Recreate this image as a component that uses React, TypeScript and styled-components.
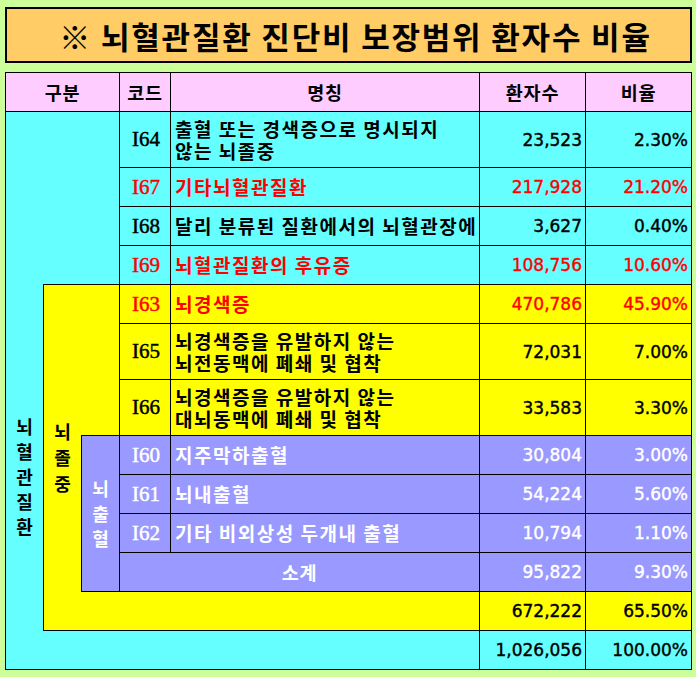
import React from "react";
import styled, { createGlobalStyle, css } from "styled-components";

const GlobalStyle = createGlobalStyle`
  html, body {
    margin: 0;
    padding: 0;
    background: #ccff99;
  }
  * { box-sizing: border-box; }
`;

type Tone = "pink" | "cyan" | "yellow" | "purple";
type Ink = "black" | "red" | "white";

const toneBg: Record<Tone, string> = {
  pink: "#ffccff",
  cyan: "#66ffff",
  yellow: "#ffff00",
  purple: "#9999ff",
};
const inkColor: Record<Ink, string> = {
  black: "#000000",
  red: "#ff0000",
  white: "#ffffff",
};

const KR = `"Noto Sans CJK KR", "Noto Sans", sans-serif`;

const Page = styled.div`
  padding: 7px 4px 0 5px;
  width: 696px;
`;

const TitleBox = styled.div`
  width: 687px;
  height: 56px;
  border: 2px solid #000;
  background: #ffcc66;
  display: flex;
  align-items: center;
  justify-content: center;
  padding-left: 14px;
  margin-bottom: 9px;
`;

const TitleText = styled.h1`
  margin: 0;
  font-family: ${KR};
  font-weight: 700;
  font-size: 31px;
  letter-spacing: 1.8px;
  color: #000;
  line-height: 1;
`;

const Table = styled.div`
  display: grid;
  width: 687px;
  grid-template-columns: 37px 38px 38px 51px 309px 106px 106px;
  grid-template-rows: 38px 56px 39px 39px 39px 39px 56px 56px 39px 39px 39px 39px 39px 39px;
  border: 1px solid #000;
  background: #66ffff;
`;

type CellProps = {
  $col: string;
  $row: string;
  $tone: Tone;
  $ink?: Ink;
  $top?: boolean;
  $left?: boolean;
};

const cellBase = css<CellProps>`
  grid-column: ${(p) => p.$col};
  grid-row: ${(p) => p.$row};
  background: ${(p) => toneBg[p.$tone]};
  color: ${(p) => inkColor[p.$ink ?? "black"]};
  border-top: ${(p) => (p.$top ? "1px solid #000" : "none")};
  border-left: ${(p) => (p.$left ? "1px solid #000" : "none")};
  display: flex;
  align-items: center;
  min-width: 0;
`;

const HeadCell = styled.div<CellProps>`
  ${cellBase};
  justify-content: center;
  font-family: ${KR};
  font-weight: 700;
  font-size: 18.5px;
  letter-spacing: 0.8px;
`;

const GroupCell = styled.div<CellProps>`
  ${cellBase};
  justify-content: center;
`;

const VerticalLabel = styled.span<{ $pitch: number }>`
  writing-mode: vertical-rl;
  text-orientation: upright;
  font-family: ${KR};
  font-weight: 700;
  font-size: 18px;
  line-height: 1;
  letter-spacing: ${(p) => p.$pitch - 18}px;
  margin-bottom: ${(p) => -(p.$pitch - 18)}px;
`;

const CodeCell = styled.div<CellProps>`
  ${cellBase};
  justify-content: center;
  padding-left: 2px;
  font-family: "Liberation Serif", "Times New Roman", serif;
  font-size: 21px;
  -webkit-text-stroke: 0.45px currentColor;
`;

const NameCell = styled.div<CellProps>`
  ${cellBase};
  padding-left: 4px;
  font-family: ${KR};
  font-weight: 700;
  font-size: 19px;
  letter-spacing: 1.5px;
  line-height: 22px;
  white-space: pre-line;
`;

const SubtotalCell = styled.div<CellProps>`
  ${cellBase};
  justify-content: center;
  font-family: ${KR};
  font-weight: 700;
  font-size: 18.5px;
  letter-spacing: 0.8px;
`;

const NumCell = styled.div<CellProps>`
  ${cellBase};
  justify-content: flex-end;
  padding-right: 3px;
  font-family: "DejaVu Sans", Verdana, sans-serif;
  font-size: 17px;
  -webkit-text-stroke: 0.4px currentColor;
`;

const BlankCell = styled.div<CellProps>`
  ${cellBase};
`;

type Row = {
  code: string;
  name: string;
  count: string;
  ratio: string;
  tone: Tone;
  ink: Ink;
};

const rows: Row[] = [
  { code: "I64", name: "출혈 또는 경색증으로 명시되지\n않는 뇌졸중", count: "23,523", ratio: "2.30%", tone: "cyan", ink: "black" },
  { code: "I67", name: "기타뇌혈관질환", count: "217,928", ratio: "21.20%", tone: "cyan", ink: "red" },
  { code: "I68", name: "달리 분류된 질환에서의 뇌혈관장에", count: "3,627", ratio: "0.40%", tone: "cyan", ink: "black" },
  { code: "I69", name: "뇌혈관질환의 후유증", count: "108,756", ratio: "10.60%", tone: "cyan", ink: "red" },
  { code: "I63", name: "뇌경색증", count: "470,786", ratio: "45.90%", tone: "yellow", ink: "red" },
  { code: "I65", name: "뇌경색증을 유발하지 않는\n뇌전동맥에 폐쇄 및 협착", count: "72,031", ratio: "7.00%", tone: "yellow", ink: "black" },
  { code: "I66", name: "뇌경색증을 유발하지 않는\n대뇌동맥에 폐쇄 및 협착", count: "33,583", ratio: "3.30%", tone: "yellow", ink: "black" },
  { code: "I60", name: "지주막하출혈", count: "30,804", ratio: "3.00%", tone: "purple", ink: "white" },
  { code: "I61", name: "뇌내출혈", count: "54,224", ratio: "5.60%", tone: "purple", ink: "white" },
  { code: "I62", name: "기타 비외상성 두개내 출혈", count: "10,794", ratio: "1.10%", tone: "purple", ink: "white" },
];

export default function App() {
  return (
    <Page>
      <GlobalStyle />
      <TitleBox>
        <TitleText>※ 뇌혈관질환 진단비 보장범위 환자수 비율</TitleText>
      </TitleBox>
      <Table>
        <HeadCell $col="1 / 4" $row="1" $tone="pink">구분</HeadCell>
        <HeadCell $col="4" $row="1" $tone="pink" $left>코드</HeadCell>
        <HeadCell $col="5" $row="1" $tone="pink" $left>명칭</HeadCell>
        <HeadCell $col="6" $row="1" $tone="pink" $left>환자수</HeadCell>
        <HeadCell $col="7" $row="1" $tone="pink" $left>비율</HeadCell>

        <BlankCell $col="1 / 4" $row="2 / 6" $tone="cyan" $top />
        <GroupCell $col="1" $row="6 / 15" $tone="cyan">
          <VerticalLabel $pitch={25}>뇌혈관질환</VerticalLabel>
        </GroupCell>
        <GroupCell $col="2" $row="6 / 14" $tone="yellow" $top $left>
          <VerticalLabel $pitch={26}>뇌졸중</VerticalLabel>
        </GroupCell>
        <BlankCell $col="3" $row="6 / 9" $tone="yellow" $top />
        <GroupCell $col="3" $row="9 / 13" $tone="purple" $ink="white" $top $left>
          <VerticalLabel $pitch={25}>뇌출혈</VerticalLabel>
        </GroupCell>

        {rows.map((r, i) => {
          const row = String(i + 2);
          return (
            <React.Fragment key={r.code}>
              <CodeCell $col="4" $row={row} $tone={r.tone} $ink={r.ink} $top $left>{r.code}</CodeCell>
              <NameCell $col="5" $row={row} $tone={r.tone} $ink={r.ink} $top $left>{r.name}</NameCell>
              <NumCell $col="6" $row={row} $tone={r.tone} $ink={r.ink} $top $left>{r.count}</NumCell>
              <NumCell $col="7" $row={row} $tone={r.tone} $ink={r.ink} $top $left>{r.ratio}</NumCell>
            </React.Fragment>
          );
        })}

        <SubtotalCell $col="4 / 6" $row="12" $tone="purple" $ink="white" $top $left>소계</SubtotalCell>
        <NumCell $col="6" $row="12" $tone="purple" $ink="white" $top $left>95,822</NumCell>
        <NumCell $col="7" $row="12" $tone="purple" $ink="white" $top $left>9.30%</NumCell>

        <BlankCell $col="3 / 6" $row="13" $tone="yellow" $top />
        <NumCell $col="6" $row="13" $tone="yellow" $top $left>672,222</NumCell>
        <NumCell $col="7" $row="13" $tone="yellow" $top $left>65.50%</NumCell>

        <BlankCell $col="2 / 6" $row="14" $tone="cyan" $top />
        <NumCell $col="6" $row="14" $tone="cyan" $top $left>1,026,056</NumCell>
        <NumCell $col="7" $row="14" $tone="cyan" $top $left>100.00%</NumCell>
      </Table>
    </Page>
  );
}
